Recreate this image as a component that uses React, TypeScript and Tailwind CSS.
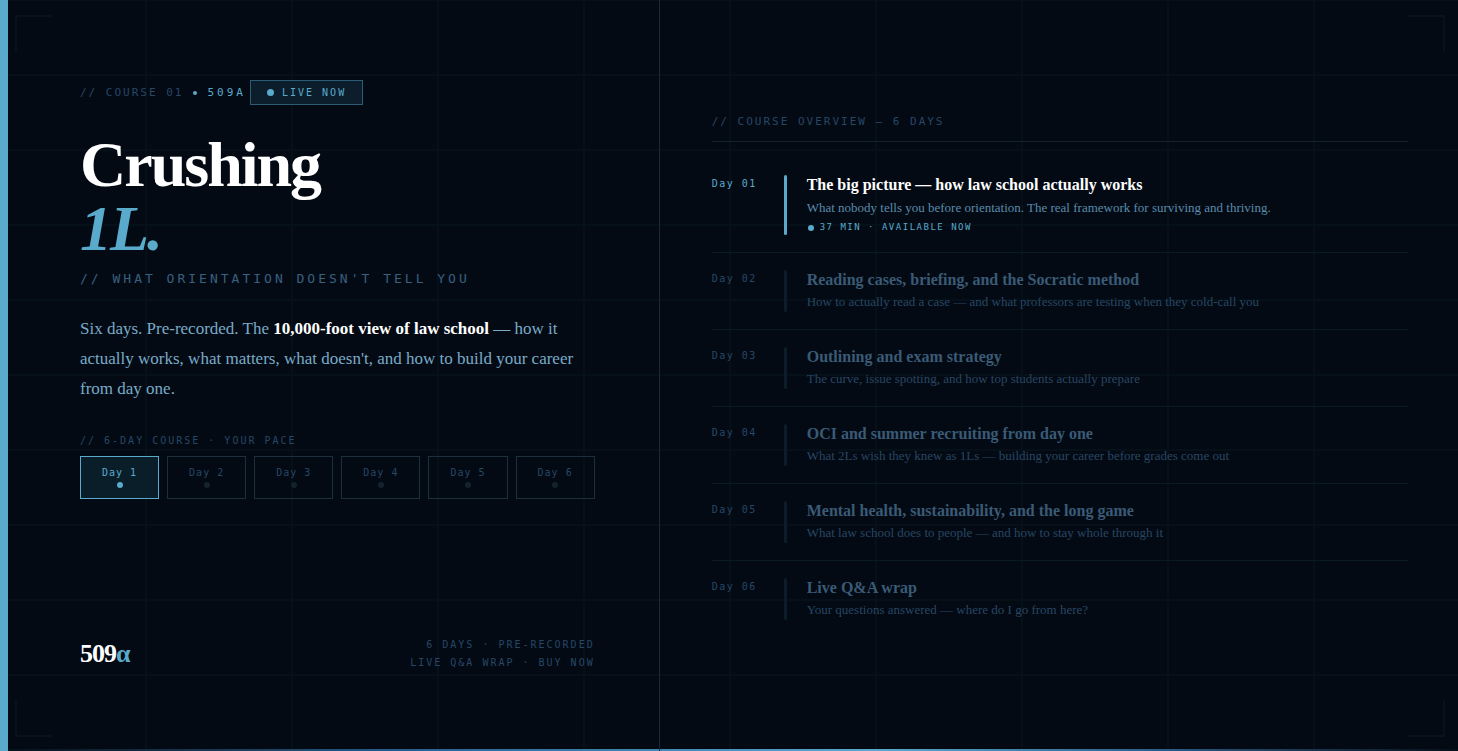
import { clsx } from "clsx";

const days = [
    { id: 1, title: "The big picture — how law school actually works", desc: "What nobody tells you before orientation. The real framework for surviving and thriving.", meta: "37 MIN · AVAILABLE NOW" },
    { id: 2, title: "Reading cases, briefing, and the Socratic method", desc: "How to actually read a case — and what professors are testing when they cold-call you" },
    { id: 3, title: "Outlining and exam strategy", desc: "The curve, issue spotting, and how top students actually prepare" },
    { id: 4, title: "OCI and summer recruiting from day one", desc: "What 2Ls wish they knew as 1Ls — building your career before grades come out" },
    { id: 5, title: "Mental health, sustainability, and the long game", desc: "What law school does to people — and how to stay whole through it" },
    { id: 6, title: "Live Q&A wrap", desc: "Your questions answered — where do I go from here?" },
];

const corners = [
    "top-[15px] left-[15px] border-t-2 border-l-2",
    "top-[15px] right-[13px] border-t-2 border-r-2",
    "bottom-[14px] left-[15px] border-b-2 border-l-2",
    "bottom-[14px] right-[13px] border-b-2 border-r-2",
];

const mono = "font-['DejaVu_Sans_Mono',monospace]";

function Backdrop() {
    return (
        <div className="absolute inset-0 pointer-events-none" aria-hidden="true">
            <svg className="w-full h-full">
                <defs>
                    <pattern id="grid" x="-1" y="1" width="146" height="75" patternUnits="userSpaceOnUse">
                        <path d="M0 0h2v75H0zM2 73h144v2H2z" fill="#3fb0b8" fillOpacity="0.035" />
                    </pattern>
                </defs>
                <rect width="100%" height="100%" fill="url(#grid)" />
            </svg>
            {corners.map((c) => (
                <span key={c} className={clsx("absolute size-[37px] border-[#07121b]", c)} />
            ))}
            <div className="absolute bottom-0 inset-x-0 h-[2px] bg-[linear-gradient(90deg,transparent,#2a6496_30%,#5aaacc_60%,#2a5a85_80%,transparent)]" />
        </div>
    );
}

function DayPicker() {
    return (
        <div className="grid grid-cols-6 gap-2 mt-2">
            {days.map(({ id }) => (
                <button
                    key={id}
                    type="button"
                    className={clsx(
                        "flex flex-col items-center gap-1 py-[10px] border text-[10px] leading-[11px] tracking-[1px]",
                        mono,
                        id === 1 ? "border-[#5aaacc] bg-[#0a1e2a] text-[#5aaacc]" : "border-[#1b2f3c] text-[#274766]"
                    )}
                >
                    Day {id}
                    <span className={clsx("size-[6px] rounded-full", id === 1 ? "bg-[#5aaacc]" : "bg-[#13232e]")} />
                </button>
            ))}
        </div>
    );
}

function DayRow({ day, last }: { day: (typeof days)[number]; last: boolean }) {
    const active = day.id === 1;

    return (
        <li className={clsx("flex py-[17px]", !last && "border-b border-[#0a1a24]")}>
            <div className={clsx("w-[72px] shrink-0 pt-[3px] text-[10px] leading-[12px] tracking-[1.5px]", mono, active ? "text-[#5aaacc]" : "text-[#274766]")}>
                Day 0{day.id}
            </div>
            <div className={clsx("w-[3px] shrink-0 rounded-[2px] mr-5", active ? "bg-[#5aaacc]" : "bg-[#0b1d29]")} />
            <div>
                <h3 className={clsx("text-[16px] leading-[19px] font-bold", active ? "text-white" : "text-[#3a5a75]")}>{day.title}</h3>
                <p className={clsx("text-[13px] leading-[20px]", active ? "mt-1 text-[#5a8aaa]" : "mt-[3px] text-[#284663]")}>{day.desc}</p>
                {day.meta && (
                    <div className={clsx("mt-[2px] pl-[1px] flex items-center gap-[6px] text-[9px] leading-[15px] tracking-[1.5px] text-[#5aaacc]", mono)}>
                        <span className="size-[6px] rounded-full bg-[#5aaacc]" />
                        {day.meta}
                    </div>
                )}
            </div>
        </li>
    );
}

export default function App() {
    return (
        <div className="relative min-h-screen flex bg-[#030a14] font-['Liberation_Serif',serif] overflow-hidden">
            <Backdrop />
            <div className="relative w-2 shrink-0 bg-[#5aaacc]" />

            <main className="relative flex-1 grid grid-cols-[449fr_550fr]">
                {/* Left panel */}
                <section className="flex flex-col justify-between pt-20 pb-[79px] pl-[72px] pr-16 border-r border-[#1a2a35]">
                    <div>
                        <div className={clsx("flex items-center text-[11px] leading-[18px] tracking-[2px] text-[#274766]", mono)}>
                            <span>// COURSE 01</span>
                            <span className="size-1 mx-[10px] rounded-full bg-[#5aaacc]" />
                            <span className="tracking-[3px] text-[#5aaacc]">509A</span>
                            <span className="flex items-center gap-2 ml-1 px-4 py-[5px] border border-[#2c5c74] bg-[#0c1e2b] text-[10px] leading-[13px] text-[#5aaacc]">
                                <span className="size-[7px] rounded-full bg-[#5aaacc]" />
                                LIVE NOW
                            </span>
                        </div>

                        <h1 className="mt-7 text-[64px] leading-[64px] font-bold tracking-[-2px] text-white">
                            Crushing
                            <br />
                            <em className="text-[#5aaacc]">1L.</em>
                        </h1>
                        <div className={clsx("mt-[10px] text-[13px] leading-[16px] tracking-[3px] text-[#3a6080]", mono)}>
                            // WHAT ORIENTATION DOESN'T TELL YOU
                        </div>

                        <p className="mt-[27px] text-[17px] leading-[30px] text-[#7aaac8]">
                            Six days. Pre-recorded. The <strong className="text-white">10,000-foot view of law school</strong> — how it
                            actually works, what matters, what doesn't, and how to build your career from day one.
                        </p>

                        <div className={clsx("mt-[30px] text-[10px] leading-[14px] tracking-[2px] text-[#274766]", mono)}>
                            // 6-DAY COURSE · YOUR PACE
                        </div>
                        <DayPicker />
                    </div>

                    <footer className="flex items-center justify-between">
                        <div className="text-[26px] leading-[30px] font-bold tracking-[-1px] text-white">
                            509<span className="text-[#5aaacc]">α</span>
                        </div>
                        <div className={clsx("text-right text-[10px] leading-[18px] tracking-[2px] text-[#274766]", mono)}>
                            6 DAYS · PRE-RECORDED
                            <br />
                            LIVE Q&A WRAP · BUY NOW
                        </div>
                    </footer>
                </section>

                {/* Course overview */}
                <section className="flex flex-col justify-center pl-[52px] pr-[50px]">
                    <h2 className={clsx("pb-[11px] mb-4 border-b border-[#13232e] text-[11px] leading-[16px] tracking-[2px] text-[#274766]", mono)}>
                        // COURSE OVERVIEW — 6 DAYS
                    </h2>
                    <ol>
                        {days.map((day) => (
                            <DayRow key={day.id} day={day} last={day.id === days.length} />
                        ))}
                    </ol>
                </section>
            </main>
        </div>
    );
}
